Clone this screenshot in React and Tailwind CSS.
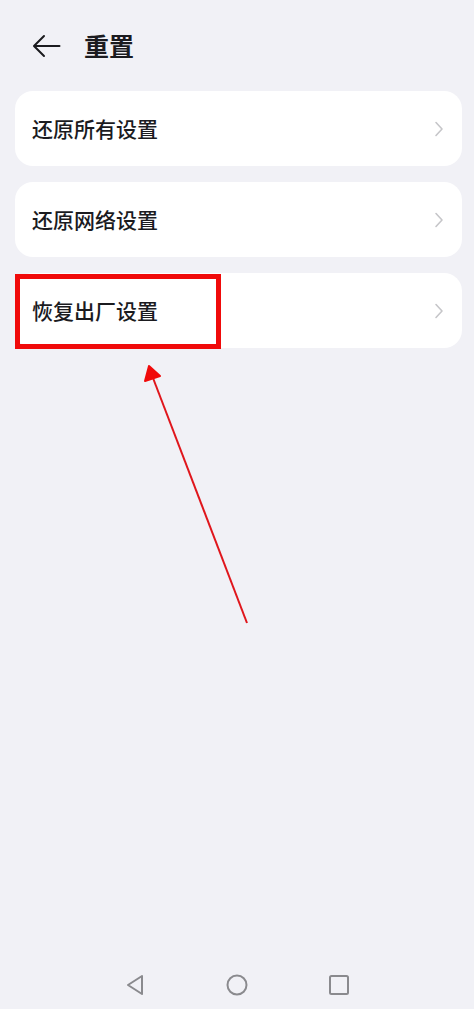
import React from 'react';

const items = ['还原所有设置', '还原网络设置', '恢复出厂设置'];

const Chevron = () => (
    <svg width="10" height="16" viewBox="0 0 10 16" fill="none">
        <path d="M2 1.5 L8 8 L2 14.5" stroke="#c6c6c9" strokeWidth="1.6" strokeLinecap="round" strokeLinejoin="round" />
    </svg>
);

const App = () => {
    return (
        <div
            className="relative w-full h-[1009px] bg-[#f1f1f6] flex flex-col overflow-hidden"
            style={{ fontFamily: '"Noto Sans CJK SC", "Noto Sans", sans-serif' }}
        >
            {/* header */}
            <div className="h-[91px] flex items-center pl-[32px] shrink-0">
                <svg width="29" height="24" viewBox="0 0 29 24" fill="none">
                    <path d="M27.5 12 H2.5 M12 2 L2 12 L12 22" stroke="#1b1b1f" strokeWidth="2" strokeLinecap="round" strokeLinejoin="round" />
                </svg>
                <h1 className="ml-[23px] text-[25px] font-bold text-[#1b1b1f] leading-none">重置</h1>
            </div>

            {/* list */}
            <div className="flex flex-col gap-[16px] ml-[15px] mr-[12px]">
                {items.map((label) => (
                    <div key={label} className="h-[75px] bg-white rounded-[18px] flex items-center justify-between pl-[17px] pr-[18px]">
                        <span className="text-[21px] font-medium text-[#1b1b1f] leading-none">{label}</span>
                        <Chevron />
                    </div>
                ))}
            </div>

            <div className="flex-1" />

            {/* nav bar */}
            <div className="h-[48px] flex items-center justify-center gap-[78px] shrink-0">
                <svg width="24" height="24" viewBox="0 0 24 24" fill="none">
                    <path d="M19 3 L5 12 L19 21 Z" stroke="#8a8a8e" strokeWidth="2" strokeLinejoin="round" />
                </svg>
                <svg width="24" height="24" viewBox="0 0 24 24" fill="none">
                    <circle cx="12" cy="12" r="9.5" stroke="#8a8a8e" strokeWidth="2" />
                </svg>
                <svg width="24" height="24" viewBox="0 0 24 24" fill="none">
                    <rect x="3" y="3" width="18" height="18" rx="1.5" stroke="#8a8a8e" strokeWidth="2" />
                </svg>
            </div>

            {/* annotation: red box */}
            <div className="absolute left-[15px] top-[274px] w-[206px] h-[75px] border-[5px] border-[#f00a0a] pointer-events-none" />

            {/* annotation: arrow */}
            <svg className="absolute left-0 top-0 pointer-events-none" width="474" height="1009" viewBox="0 0 474 1009">
                <line x1="247" y1="623" x2="153" y2="378" stroke="#e0161c" strokeWidth="2" />
                <path d="M149 366 L145 381 L160 376 Z" fill="#f00a0a" stroke="#f00a0a" strokeWidth="2" strokeLinejoin="round" />
            </svg>
        </div>
    );
};

export default App;
